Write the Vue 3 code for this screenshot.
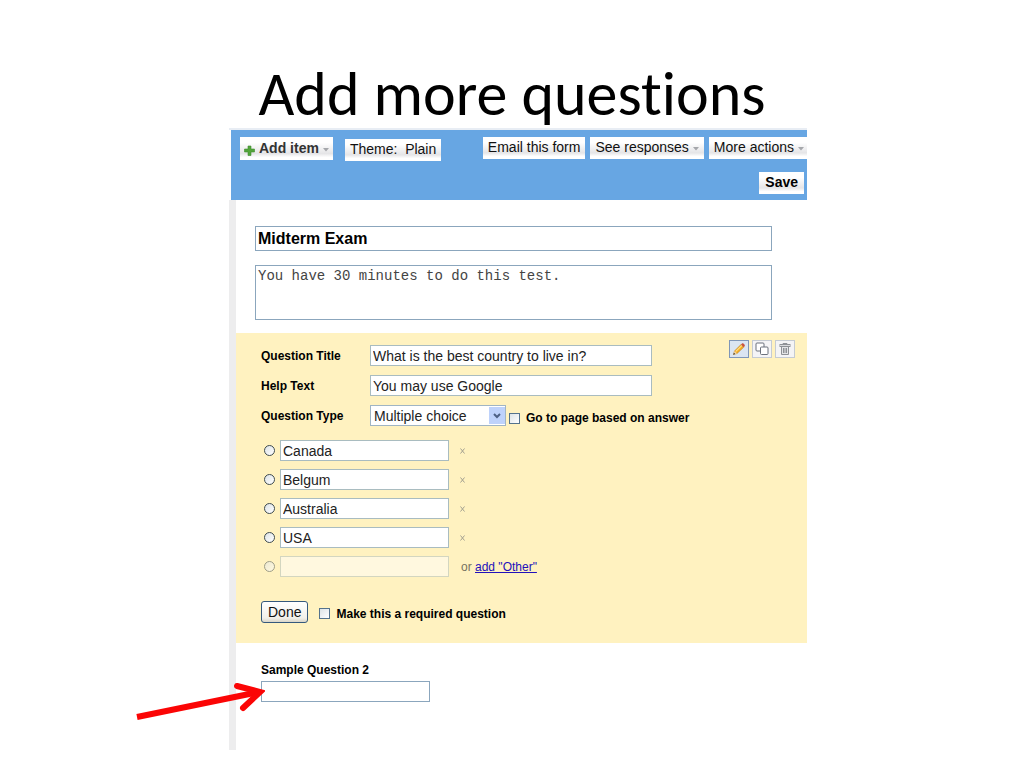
<script setup>
import { ref } from 'vue'

const formTitle = ref('Midterm Exam')
const description = ref('You have 30 minutes to do this test.')
const questionTitle = ref('What is the best country to live in?')
const helpText = ref('You may use Google')
const questionType = ref('Multiple choice')
const jump = ref(false)
const required = ref(false)
const options = ref(['Canada', 'Belgum', 'Australia', 'USA'])

function removeOption(index) {
  options.value.splice(index, 1)
}
function addOther() {
  options.value.push('Other')
}
</script>

<template>
  <main class="slide">
    <h1>Add more questions</h1>

    <section class="editor" aria-label="Form editor">
      <header class="bar">
        <div class="bar-row">
          <button type="button" class="tool add">
            <svg class="plus" width="11" height="11" viewBox="0 0 11 11" aria-hidden="true">
              <path d="M4 1h3v3h3.500v3H7v3.500H4V7H.5V4H4z" fill="#52a43a" stroke="#3f8d31" stroke-width=".6" />
            </svg>
            <span>Add item</span>
            <svg class="caret" width="6" height="4" viewBox="0 0 6 4" aria-hidden="true"><path d="M0 0h6L3 3.500z" fill="#a5a7ab" /></svg>
          </button>
          <button type="button" class="tool theme">Theme:&nbsp; Plain</button>
          <div class="right">
            <button type="button" class="tool">Email this form</button>
            <button type="button" class="tool">
              <span>See responses</span>
              <svg class="caret" width="6" height="4" viewBox="0 0 6 4" aria-hidden="true"><path d="M0 0h6L3 3.500z" fill="#a5a7ab" /></svg>
            </button>
            <button type="button" class="tool last">
              <span>More actions</span>
              <svg class="caret" width="6" height="4" viewBox="0 0 6 4" aria-hidden="true"><path d="M0 0h6L3 3.500z" fill="#a5a7ab" /></svg>
            </button>
          </div>
        </div>
        <div class="save-row">
          <button type="button" class="tool save">Save</button>
        </div>
      </header>

      <div class="body">
        <div class="intro">
          <input v-model="formTitle" class="form-title" type="text" aria-label="Form title" />
          <textarea v-model="description" aria-label="Form description" spellcheck="false"></textarea>
        </div>

        <div class="question">
          <div class="actions">
            <button type="button" class="icon active" aria-label="Edit">
              <svg width="14" height="14" viewBox="0 0 14 14" aria-hidden="true">
                <path d="M1.500 12.500l1-3.500L9 2.500l2.700 2.700L5 11.500z" fill="#f5ae25" stroke="#b9801d" stroke-width=".6" />
                <path d="M3.800 9.400L10 3.400" stroke="#ffe08a" stroke-width="1.200" />
                <path d="M9 2.500l1.200-1.200c.9-.6 3.200 1.600 2.600 2.600L11.700 5.200z" fill="#c9543f" />
                <path d="M2.500 9L5 11.500l-3.500 1z" fill="#f2d6a8" />
                <path d="M2 10.800l1.200 1.200-2 .8z" fill="#333" />
              </svg>
            </button>
            <button type="button" class="icon" aria-label="Duplicate">
              <svg width="14" height="14" viewBox="0 0 14 14" aria-hidden="true">
                <rect x="1" y="1" width="8" height="8" rx="1" fill="#fff" stroke="#6b717c" />
                <rect x="5.500" y="5" width="7.500" height="7.500" rx="1" fill="#fff" stroke="#6b717c" />
              </svg>
            </button>
            <button type="button" class="icon" aria-label="Delete">
              <svg width="14" height="14" viewBox="0 0 14 14" fill="none" stroke="#8e9196" aria-hidden="true">
                <path d="M5 2.500v-1h4v1" />
                <rect x="2" y="2.500" width="10" height="2" fill="#d9dadd" />
                <path d="M3.500 5v7.500h7V5" fill="#e4e5e8" />
                <path d="M5.500 6v5M7 6v5M8.500 6v5" />
              </svg>
            </button>
          </div>

          <div class="fields">
            <label for="q-title">Question Title</label>
            <input id="q-title" v-model="questionTitle" class="text wide" type="text" />
            <label for="q-help">Help Text</label>
            <input id="q-help" v-model="helpText" class="text wide" type="text" />
            <label for="q-type">Question Type</label>
            <div class="type-row">
              <span class="select">
                <select id="q-type" v-model="questionType">
                  <option>Multiple choice</option>
                </select>
                <span class="drop" aria-hidden="true">
                  <svg width="8" height="6" viewBox="0 0 8 6"><path d="M1 1l3 3 3-3" fill="none" stroke="#4d6185" stroke-width="2" /></svg>
                </span>
              </span>
              <label class="check"><input v-model="jump" type="checkbox" /><span>Go to page based on answer</span></label>
            </div>
          </div>

          <ul class="options">
            <li v-for="(option, index) in options" :key="index">
              <input type="radio" name="answer" :aria-label="option" />
              <input v-model="options[index]" class="text short" type="text" :aria-label="'Option ' + (index + 1)" />
              <button type="button" class="remove" aria-label="Remove option" @click="removeOption(index)">
                <svg width="5" height="6" viewBox="0 0 5 6" aria-hidden="true"><path d="M.5.5l4 5M4.500.5l-4 5" stroke="#a3a190" stroke-width="1" /></svg>
              </button>
            </li>
            <li class="extra">
              <input type="radio" name="answer" aria-label="New option" disabled />
              <input class="text short" type="text" aria-label="New option text" />
              <span class="other">or <a href="#other" @click.prevent="addOther">add "Other"</a></span>
            </li>
          </ul>

          <div class="finish">
            <button type="button" class="done">Done</button>
            <label class="check"><input v-model="required" type="checkbox" /><span>Make this a required question</span></label>
          </div>
        </div>

        <div class="sample">
          <label for="sample-2">Sample Question 2</label>
          <div class="sample-field">
            <input id="sample-2" class="text short" type="text" />
            <svg class="arrow" width="130" height="42" viewBox="0 0 130 42" fill="none" stroke="#fb0505" stroke-width="6" aria-hidden="true">
              <path d="M2 37L124 12" />
              <path d="M102 6L125 12L108 28" stroke-linecap="round" />
            </svg>
          </div>
        </div>
      </div>
    </section>
  </main>
</template>

<style>
body {
  background: #fff;
}
</style>

<style scoped>
* {
  box-sizing: border-box;
}
.slide {
  display: grid;
  grid-template-columns: 229fr 578fr 217fr;
  padding: 62px 0 16px;
  color: #000;
  font-family: "Liberation Sans", Arial, sans-serif;
  font-size: 12px;
}
h1 {
  grid-column: 1 / -1;
  margin: 0;
  padding-bottom: 2px;
  font-family: Carlito, Lato, sans-serif;
  font-size: 62px;
  font-weight: 400;
  font-variant-ligatures: none;
  line-height: 64px;
  text-align: center;
}
button,
input,
select,
textarea {
  margin: 0;
  font-family: inherit;
  color: inherit;
}
.editor {
  grid-column: 2;
  min-width: 0;
  border-top: 2px solid #e8edf4;
}
.bar {
  height: 70px;
  margin-left: 2px;
  padding: 7px 0 0 9px;
  overflow: hidden;
  background: #67a6e3;
}
.bar-row {
  display: flex;
  align-items: flex-start;
  height: 35px;
}
.tool {
  display: flex;
  align-items: center;
  gap: 4px;
  height: 22px;
  padding: 0 5px 2px;
  border: 0;
  background: linear-gradient(#fff 0 25%, #e5e5e7 72%, #fff 88%);
  color: #111;
  font-size: 14px;
  line-height: 20px;
  white-space: nowrap;
}
.caret {
  margin-top: 4px;
}
.add {
  height: 23px;
  padding: 0 4px 1px;
  color: #333;
  font-weight: bold;
}
.plus {
  margin-top: 4px;
}
.theme {
  margin: 2px 0 0 12px;
}
.right {
  display: flex;
  gap: 5px;
  margin-left: auto;
}
.last {
  padding-right: 3px;
}
.save-row {
  display: flex;
  justify-content: flex-end;
  padding-right: 3px;
}
.save {
  padding: 0 6px 2px;
  color: #000;
  font-weight: bold;
}
.body {
  padding-bottom: 48px;
  border-left: 7px solid #ededee;
}
.intro {
  display: flex;
  flex-direction: column;
  gap: 14px;
  padding: 26px 35px 13px 19px;
}
.form-title,
textarea {
  display: block;
  width: 100%;
  padding: 0 2px;
  border: 1px solid #8ba6bd;
  border-radius: 0;
  background: #fff;
}
.form-title {
  height: 25px;
  font-size: 16px;
  font-weight: bold;
}
textarea {
  height: 55px;
  padding: 2px;
  overflow: hidden;
  resize: none;
  color: #444;
  font-family: "Liberation Mono", "Courier New", monospace;
  font-size: 14px;
  line-height: 16px;
}
.question {
  position: relative;
  padding: 12px 12px 20px 25px;
  background: #fff2c0;
}
.actions {
  position: absolute;
  top: 7px;
  right: 12px;
  display: flex;
  gap: 3px;
}
.icon {
  display: grid;
  place-items: center;
  width: 20px;
  height: 18px;
  padding: 0;
  border: 1px solid #c5cbd3;
  background: #f4f4f6;
}
.active {
  border-color: #7f96b8;
  background: #dbe5f2;
}
.fields {
  display: grid;
  grid-template-columns: 109px 1fr;
  row-gap: 9px;
  align-items: center;
}
.fields label,
.finish label,
.sample label {
  font-weight: bold;
  line-height: 16px;
}
.text {
  height: 21px;
  padding: 0 2px;
  border: 1px solid #a9bcc0;
  border-radius: 0;
  background: #fff;
  color: #222;
}
.wide {
  width: 282px;
  font-size: 14px;
}
.short {
  width: 169px;
  font-size: 14px;
}
.type-row {
  display: flex;
  align-items: center;
  gap: 3px;
}
.select {
  position: relative;
  width: 136px;
  height: 21px;
}
select {
  width: 100%;
  height: 21px;
  padding: 0 20px 0 3px;
  appearance: none;
  border: 1px solid #a0b5c4;
  border-radius: 0;
  background: #fff;
  color: #222;
  font-size: 14px;
}
.drop {
  position: absolute;
  top: 2px;
  right: 1px;
  bottom: 2px;
  display: grid;
  place-items: center;
  width: 16px;
  background: #bed2fb;
  pointer-events: none;
}
.check {
  display: flex;
  align-items: center;
  gap: 6px;
  padding-top: 5px;
}
input[type="checkbox"],
input[type="radio"] {
  flex: none;
  width: 11px;
  height: 11px;
  appearance: none;
  border: 1px solid #54728c;
  background: linear-gradient(135deg, #dde3e6, #fff);
}
input[type="checkbox"]:checked {
  background: #3f73a8;
}
input[type="radio"] {
  border-color: #3e4b50;
  border-radius: 50%;
}
input[type="radio"]:checked {
  box-shadow: inset 0 0 0 2px #fff;
  background: #3c8f3c;
}
.options {
  display: grid;
  gap: 8px;
  margin: 14px 0 24px;
  padding: 0 0 0 3px;
  list-style: none;
}
.options li {
  display: flex;
  align-items: center;
  gap: 5px;
}
.remove {
  display: grid;
  place-items: center;
  width: 17px;
  height: 15px;
  padding: 0;
  border: 0;
  background: none;
}
.extra input {
  opacity: 0.5;
}
.other {
  padding-left: 7px;
  color: #777361;
}
.other a {
  color: #2211bb;
}
.finish {
  display: flex;
  align-items: center;
  gap: 11px;
}
.finish .check {
  padding-top: 3px;
}
.done {
  height: 22px;
  padding: 0 6px;
  border: 1px solid #35597d;
  border-radius: 3px;
  background: linear-gradient(#fff, #f1f0ea 80%, #d9d5c8);
  color: #111;
  font-size: 14px;
}
.sample {
  padding: 19px 0 0 25px;
}
.sample label {
  display: block;
  margin-bottom: 3px;
}
.sample-field {
  position: relative;
  display: flex;
}
.sample .text {
  border-color: #8ba6bd;
}
.arrow {
  position: absolute;
  top: -1px;
  left: -126px;
}
</style>
